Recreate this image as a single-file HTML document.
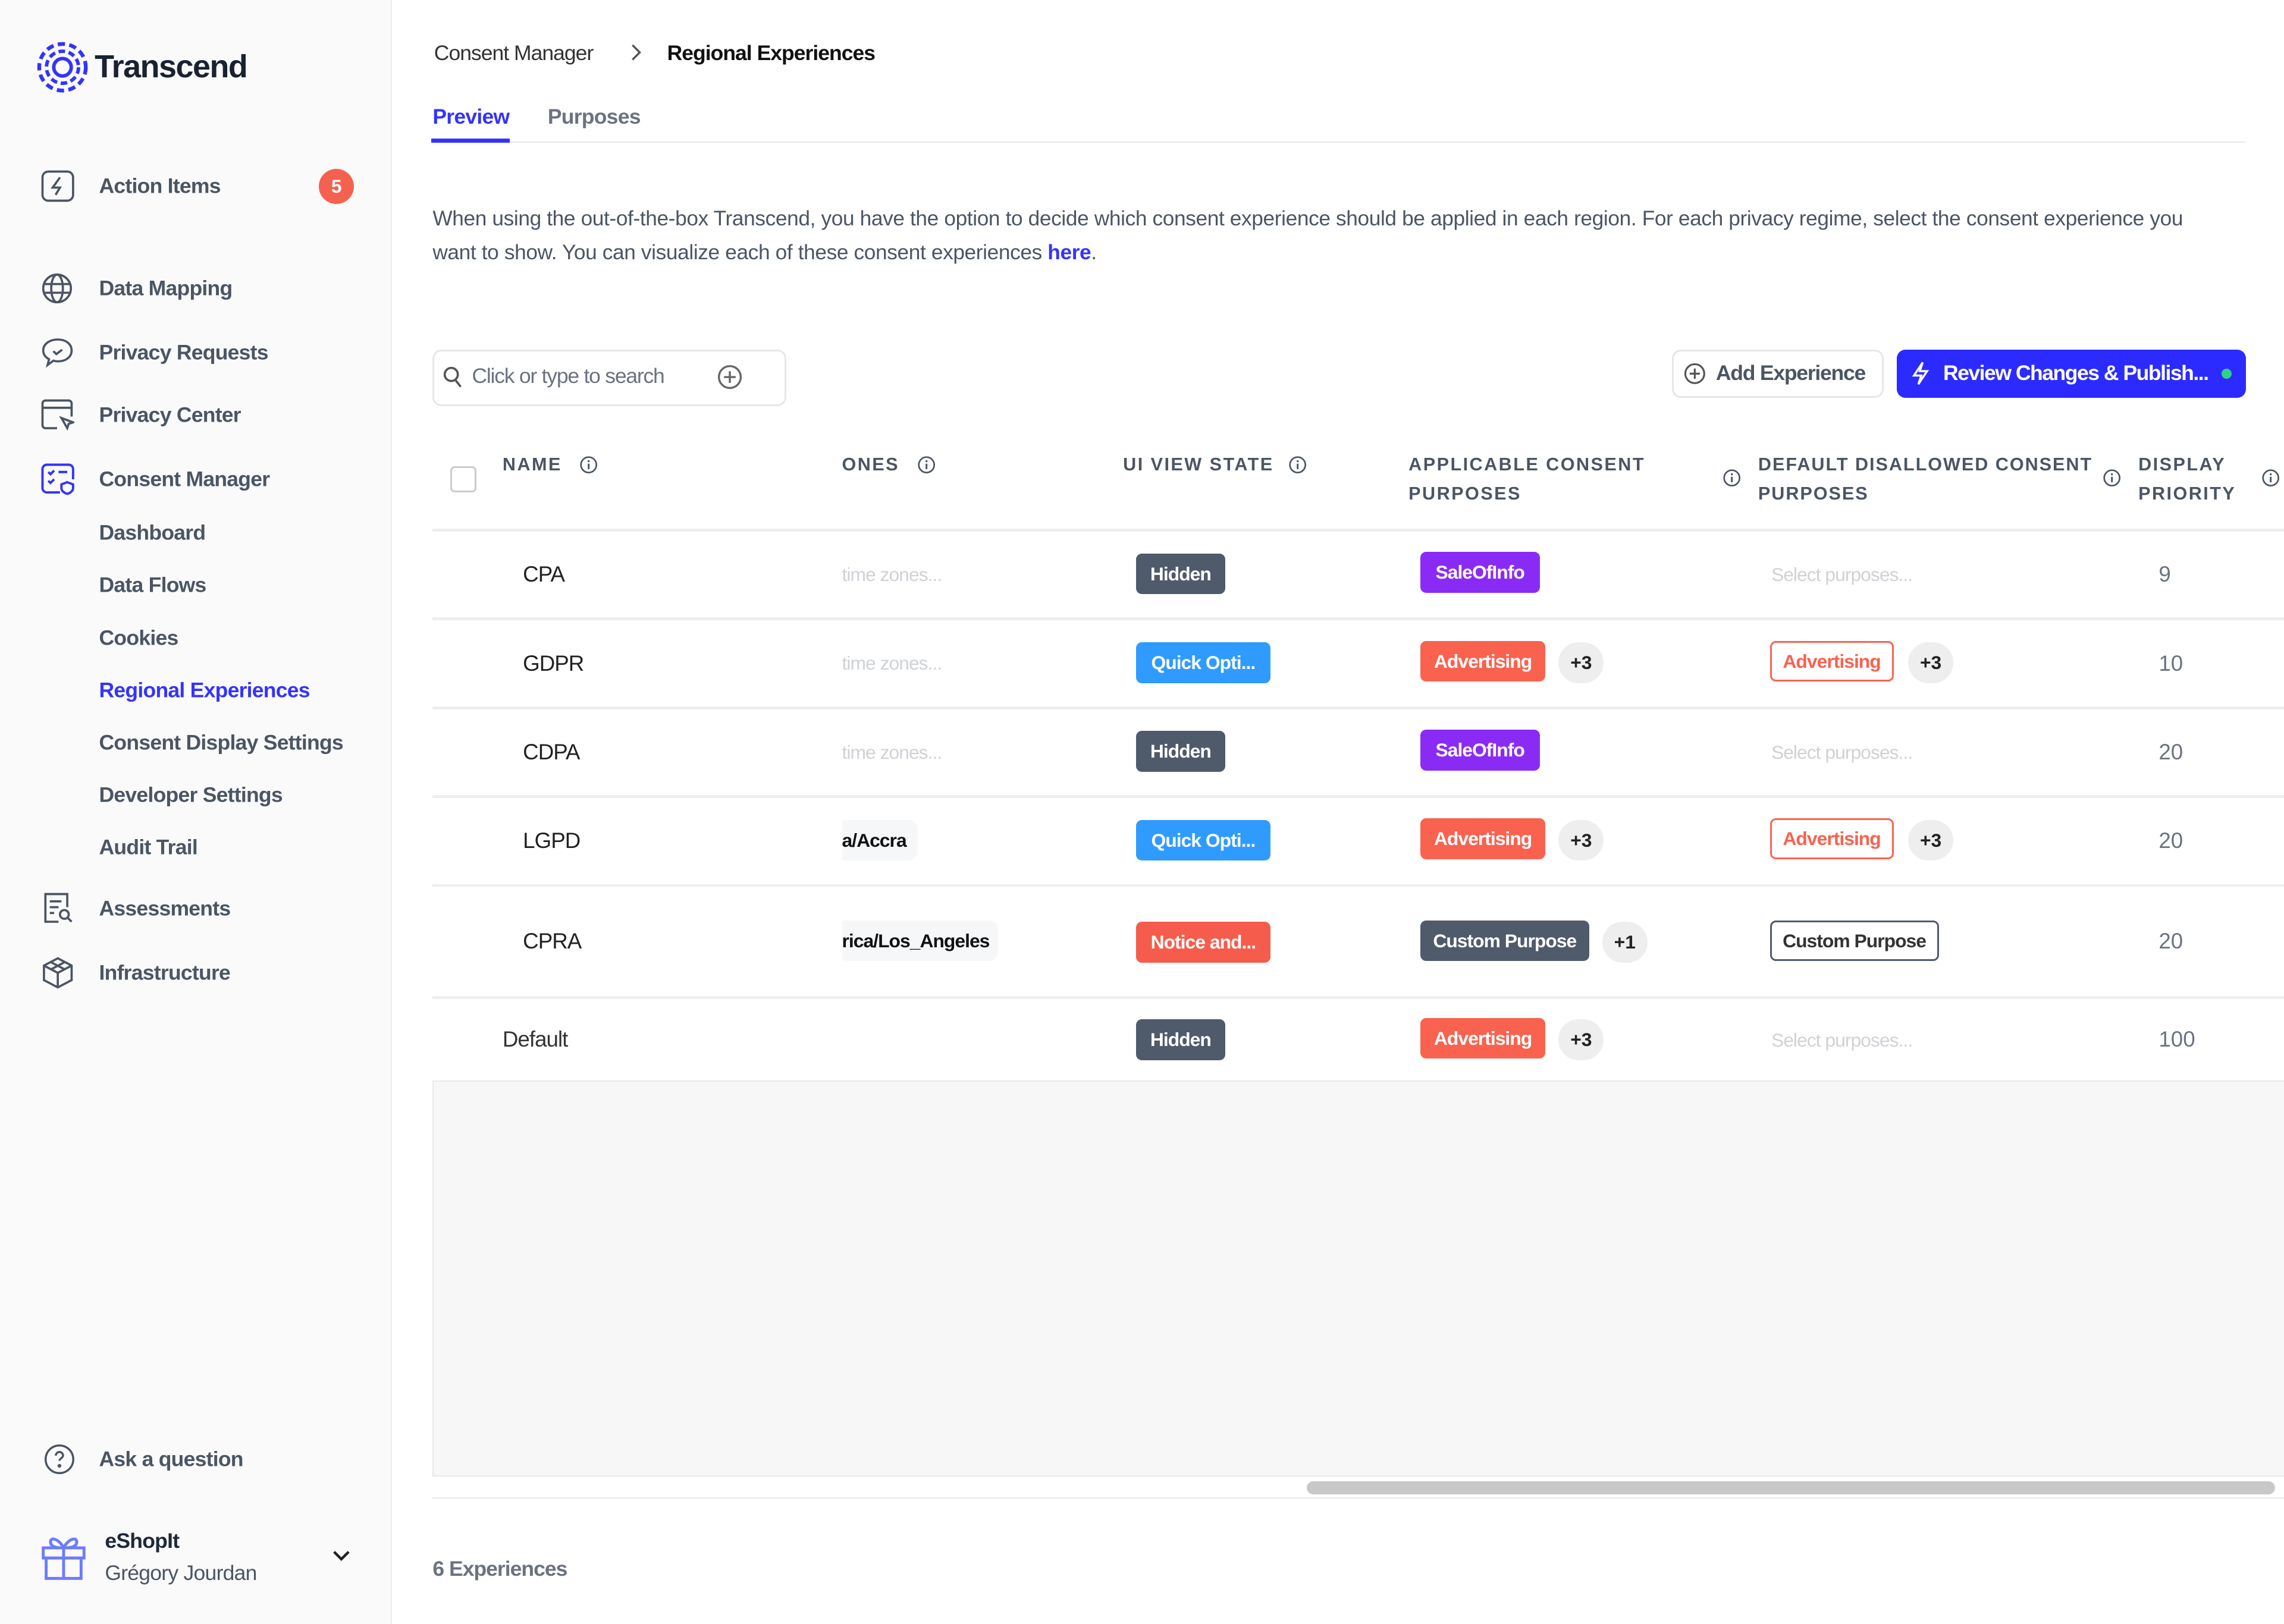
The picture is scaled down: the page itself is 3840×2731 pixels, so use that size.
<!DOCTYPE html>
<html><head><meta charset="utf-8"><style>
*{box-sizing:border-box;margin:0;padding:0}
html,body{width:3840px;height:2731px;overflow:hidden;background:#fff}
#r{zoom:2.44898;width:1568px;height:1115.2px;position:relative;font-family:"Liberation Sans",sans-serif;color:#1f2937;overflow:hidden}
.a{position:absolute;white-space:nowrap}
.nav{font-size:14.5px;font-weight:bold;color:#4b5563;letter-spacing:-0.3px;transform:translateY(-50%)}
.sub{left:68px}
.ic{position:absolute;transform:translateY(-50%)}
.hd{font-size:12.5px;font-weight:bold;color:#4b5563;letter-spacing:1px;line-height:20px}
.b{position:absolute;height:28px;line-height:28px;border-radius:4px;font-size:13px;font-weight:bold;color:#fff;text-align:center;letter-spacing:-0.4px}
.p{position:absolute;height:28px;width:31px;line-height:28px;border-radius:14px;background:#eeeeef;font-size:13px;font-weight:bold;text-align:center;color:#222}
.hl{position:absolute;left:297px;right:0;height:2px;background:#eee}
.ph{color:#cfd2d6;font-size:13px;letter-spacing:-0.4px}
.nm{font-size:15px;color:#222;letter-spacing:-0.4px}
.num{font-size:15px;color:#6b7280}
</style></head><body><div id="r">
<div class="a" style="left:0;top:0;width:269px;height:1116px;background:#fafafa;border-right:1px solid #ececec"></div>
<svg class="a" style="left:25px;top:28px" width="36" height="36" viewBox="0 0 36 36" fill="none" stroke="#3333ff"><circle cx="18" cy="18" r="16" stroke-width="2.6" stroke-dasharray="5 3"/><circle cx="18" cy="18" r="11" stroke-width="2.4" stroke-dasharray="4.5 2.5"/><circle cx="18" cy="18" r="6" stroke-width="2.4"/></svg>
<div class="a" style="left:65px;top:33px;font-size:22px;font-weight:bold;color:#1a2230;letter-spacing:-0.6px">Transcend</div>

<svg class="ic" style="left:28px;top:128px" width="23" height="22" viewBox="0 0 23 22" fill="none" stroke="#4b5563" stroke-width="1.5"><rect x="1" y="1" width="21" height="20" rx="4"/><path d="M13 5l-5 7h5l-3 5"/></svg>
<div class="a nav" style="left:68px;top:128px">Action Items</div>
<div class="a" style="left:219px;top:116px;width:24px;height:24px;border-radius:12px;background:#f5614f;color:#fff;font-size:13px;font-weight:bold;text-align:center;line-height:24px">5</div>

<svg class="ic" style="left:28px;top:198px" width="23" height="22" viewBox="0 0 23 22" fill="none" stroke="#4b5563" stroke-width="1.5"><circle cx="11" cy="11" r="9.5"/><ellipse cx="11" cy="11" rx="4" ry="9.5"/><path d="M1.5 8h19M1.5 14h19"/></svg>
<div class="a nav" style="left:68px;top:198px">Data Mapping</div>
<svg class="ic" style="left:28px;top:242px" width="23" height="22" viewBox="0 0 23 22" fill="none" stroke="#4b5563" stroke-width="1.5"><path d="M11.5 2C6 2 1.5 5 1.5 9.5c0 3 2 5 4 6l-1 4 4-3c1 .3 2 .5 3 .5 5.5 0 9.5-3 9.5-7.5S17 2 11.5 2z"/><path d="M8.5 10l2 2 4-3"/></svg>
<div class="a nav" style="left:68px;top:242px">Privacy Requests</div>
<svg class="ic" style="left:28px;top:285px" width="23" height="22" viewBox="0 0 23 22" fill="none" stroke="#4b5563" stroke-width="1.5"><path d="M11 20H3a2 2 0 01-2-2V3a2 2 0 012-2h16a2 2 0 012 2v9M1 6h20"/><path d="M14 13l8 3-3 1-1 3z"/></svg>
<div class="a nav" style="left:68px;top:285px">Privacy Center</div>
<svg class="ic" style="left:28px;top:329px" width="23" height="22" viewBox="0 0 23 22" fill="none" stroke="#3333ff" stroke-width="1.6"><path d="M13 20H4a3 3 0 01-3-3V4a3 3 0 013-3h15a3 3 0 013 3v7"/><path d="M5 6l1.5 1.5L9 5M5 12l1.5 1.5L9 11M12 6h6"/><path d="M18 13l4 1.5v2.5c0 2-2 3.5-4 4-2-.5-4-2-4-4v-2.5z"/></svg>
<div class="a nav" style="left:68px;top:329px">Consent Manager</div>
<div class="a nav sub" style="top:366px">Dashboard</div>
<div class="a nav sub" style="top:402px">Data Flows</div>
<div class="a nav sub" style="top:438px">Cookies</div>
<div class="a nav sub" style="top:474px;color:#3333ff">Regional Experiences</div>
<div class="a nav sub" style="top:510px">Consent Display Settings</div>
<div class="a nav sub" style="top:546px">Developer Settings</div>
<div class="a nav sub" style="top:582px">Audit Trail</div>
<svg class="ic" style="left:28px;top:624px" width="23" height="22" viewBox="0 0 23 22" fill="none" stroke="#4b5563" stroke-width="1.5"><path d="M12 20H3V1h15v9M6 6h8M6 10h6M6 14h3"/><circle cx="16" cy="15" r="3"/><path d="M18 17l3 3"/></svg>
<div class="a nav" style="left:68px;top:624px">Assessments</div>
<svg class="ic" style="left:28px;top:668px" width="23" height="22" viewBox="0 0 23 22" fill="none" stroke="#4b5563" stroke-width="1.5"><path d="M11.5 1l9.5 5v10l-9.5 5-9.5-5V6z"/><path d="M2 6l9.5 5 9.5-5M11.5 11v10M6.5 3.5l9.5 5M16.5 3.5l-9.5 5"/></svg>
<div class="a nav" style="left:68px;top:668px">Infrastructure</div>
<svg class="ic" style="left:30px;top:1002px" width="22" height="22" viewBox="0 0 22 22" fill="none" stroke="#4b5563" stroke-width="1.4"><circle cx="11" cy="11" r="9.5"/><path d="M8.5 8.5a2.5 2.5 0 115 0c0 1.5-2.5 2-2.5 3.5"/><circle cx="11" cy="15.5" r=".6" fill="#4b5563"/></svg>
<div class="a nav" style="left:68px;top:1002px">Ask a question</div>
<svg class="a" style="left:28px;top:1052px" width="31" height="33" viewBox="0 0 31 33" fill="none" stroke="#6b7cff" stroke-width="2"><rect x="1.5" y="11" width="28" height="7"/><rect x="3.5" y="18" width="24" height="14"/><path d="M15.5 11v21M15.5 11c-3-6-9-8-9-4s6 4 9 4c3 0 9 0 9-4s-6-2-9 4"/></svg>
<div class="a" style="left:72px;top:1050px;font-size:14.5px;font-weight:bold;color:#1f2937;letter-spacing:-0.3px">eShopIt</div>
<div class="a" style="left:72px;top:1072px;font-size:14.5px;color:#4b5563;letter-spacing:-0.3px">Grégory Jourdan</div>
<svg class="a" style="left:228px;top:1064px" width="13" height="9" viewBox="0 0 13 9" fill="none" stroke="#222" stroke-width="1.8"><path d="M1.5 1.5l5 5 5-5"/></svg>

<div class="a" style="left:298px;top:28px;font-size:14.5px;color:#333;letter-spacing:-0.4px">Consent Manager</div>
<svg class="a" style="left:431px;top:29px" width="10" height="14" viewBox="0 0 10 14" fill="none" stroke="#555" stroke-width="1.4"><path d="M3 2l5 5-5 5"/></svg>
<div class="a" style="left:458px;top:28px;font-size:14.5px;font-weight:bold;color:#111;letter-spacing:-0.4px">Regional Experiences</div>
<div class="a" style="left:297px;top:72px;font-size:14.5px;font-weight:bold;color:#3333ff;letter-spacing:-0.3px">Preview</div>
<div class="a" style="left:376px;top:72px;font-size:14.5px;font-weight:bold;color:#6b7280;letter-spacing:-0.3px">Purposes</div>
<div class="a" style="left:297px;top:97px;width:1244px;height:1px;background:#e5e7eb"></div>
<div class="a" style="left:296px;top:95px;width:54px;height:3px;background:#3333ff"></div>
<div class="a" style="left:297px;top:139px;width:1225px;white-space:normal;font-size:14.4px;line-height:23px;color:#4b5563;letter-spacing:-0.15px">When using the out-of-the-box Transcend, you have the option to decide which consent experience should be applied in each region. For each privacy regime, select the consent experience you want to show. You can visualize each of these consent experiences <b style="color:#3333ff">here</b>.</div>

<div class="a" style="left:297px;top:240px;width:243px;height:39px;border:1.5px solid #e6e7ea;border-radius:6px"></div>
<svg class="a" style="left:304px;top:251px" width="14" height="16" viewBox="0 0 14 16" fill="none" stroke="#555" stroke-width="1.5"><circle cx="6" cy="6" r="4.5"/><path d="M9 10l3.5 4.5"/></svg>
<div class="a" style="left:324px;top:250px;font-size:14.5px;color:#6b7280;letter-spacing:-0.5px">Click or type to search</div>
<svg class="a" style="left:492px;top:250px" width="18" height="18" viewBox="0 0 18 18" fill="none" stroke="#666" stroke-width="1.4"><circle cx="9" cy="9" r="7.5"/><path d="M9 5v8M5 9h8"/></svg>

<div class="a" style="left:1148px;top:240px;width:145px;height:33px;border:1.5px solid #e6e7ea;border-radius:6px"></div>
<svg class="a" style="left:1156px;top:249px" width="15" height="15" viewBox="0 0 15 15" fill="none" stroke="#555" stroke-width="1.3"><circle cx="7.5" cy="7.5" r="6.5"/><path d="M7.5 4v7M4 7.5h7"/></svg>
<div class="a" style="left:1178px;top:248px;font-size:14.5px;font-weight:bold;color:#4b5563;letter-spacing:-0.5px">Add Experience</div>
<div class="a" style="left:1302px;top:240px;width:240px;height:33px;background:#2b2bff;border-radius:6px"></div>
<svg class="a" style="left:1312px;top:248px" width="13" height="17" viewBox="0 0 13 17" fill="none" stroke="#fff" stroke-width="1.4"><path d="M8 1L2 10h5l-2 6 6-9H6z"/></svg>
<div class="a" style="left:1334px;top:248px;font-size:14.5px;font-weight:bold;color:#fff;letter-spacing:-0.6px">Review Changes &amp; Publish...</div>
<div class="a" style="left:1525px;top:253px;width:7px;height:7px;border-radius:4px;background:#2fd08a"></div>

<div class="a" style="left:309px;top:320px;width:18px;height:18px;border:1.5px solid #c8cbd0;border-radius:3px;background:#fff"></div>
<div class="a hd" style="left:345px;top:309px">NAME</div>
<div class="a hd" style="left:578px;top:309px">ONES</div>
<div class="a hd" style="left:771px;top:309px">UI VIEW STATE</div>
<div class="a hd" style="left:967px;top:309px">APPLICABLE CONSENT<br>PURPOSES</div>
<div class="a hd" style="left:1207px;top:309px;letter-spacing:0.8px">DEFAULT DISALLOWED CONSENT<br>PURPOSES</div>
<div class="a hd" style="left:1468px;top:309px">DISPLAY<br>PRIORITY</div>
<svg width="0" height="0" style="position:absolute"><defs><g id="i"><circle cx="6" cy="6" r="5.3" fill="none" stroke="#4b5563" stroke-width="1.1"/><path d="M6 5.2v3.8" stroke="#4b5563" stroke-width="1.2"/><circle cx="6" cy="3.5" r=".7" fill="#4b5563"/></g></defs></svg>
<svg class="a" style="left:398px;top:313px" width="12" height="12"><use href="#i"/></svg>
<svg class="a" style="left:630px;top:313px" width="12" height="12"><use href="#i"/></svg>
<svg class="a" style="left:885px;top:313px" width="12" height="12"><use href="#i"/></svg>
<svg class="a" style="left:1183px;top:322px" width="12" height="12"><use href="#i"/></svg>
<svg class="a" style="left:1444px;top:322px" width="12" height="12"><use href="#i"/></svg>
<svg class="a" style="left:1553px;top:322px" width="12" height="12"><use href="#i"/></svg>

<div class="hl" style="top:363px"></div>
<div class="hl" style="top:424px"></div>
<div class="hl" style="top:485px"></div>
<div class="hl" style="top:546px"></div>
<div class="hl" style="top:607px"></div>
<div class="hl" style="top:684px"></div>

<div class="a nm" style="left:359px;top:386px">CPA</div>
<div class="a ph" style="left:578px;top:387px">time zones...</div>
<div class="b" style="left:780px;top:380px;width:61px;background:#4f5a6b">Hidden</div>
<div class="b" style="left:975px;top:379px;width:82px;background:#8a2bf5">SaleOfInfo</div>
<div class="a ph" style="left:1216px;top:387px">Select purposes...</div>
<div class="a num" style="left:1482px;top:386px">9</div>

<div class="a nm" style="left:359px;top:447px">GDPR</div>
<div class="a ph" style="left:578px;top:448px">time zones...</div>
<div class="b" style="left:780px;top:441px;width:92px;background:#2f9bff">Quick Opti...</div>
<div class="b" style="left:975px;top:440px;width:86px;background:#f9624f">Advertising</div>
<div class="p" style="left:1070px;top:441px">+3</div>
<div class="b" style="left:1215px;top:440px;width:85px;background:#fff;border:1.5px solid #f9624f;color:#f9624f;line-height:26px">Advertising</div>
<div class="p" style="left:1310px;top:441px">+3</div>
<div class="a num" style="left:1482px;top:447px">10</div>

<div class="a nm" style="left:359px;top:508px">CDPA</div>
<div class="a ph" style="left:578px;top:509px">time zones...</div>
<div class="b" style="left:780px;top:502px;width:61px;background:#4f5a6b">Hidden</div>
<div class="b" style="left:975px;top:501px;width:82px;background:#8a2bf5">SaleOfInfo</div>
<div class="a ph" style="left:1216px;top:509px">Select purposes...</div>
<div class="a num" style="left:1482px;top:508px">20</div>

<div class="a nm" style="left:359px;top:569px">LGPD</div>
<div class="a" style="left:578px;top:563px;width:52px;height:28px;background:#f6f7f8;border-radius:0 6px 6px 0;font-size:13px;font-weight:bold;line-height:28px;color:#111;letter-spacing:-0.4px">a/Accra</div>
<div class="b" style="left:780px;top:563px;width:92px;background:#2f9bff">Quick Opti...</div>
<div class="b" style="left:975px;top:562px;width:86px;background:#f9624f">Advertising</div>
<div class="p" style="left:1070px;top:563px">+3</div>
<div class="b" style="left:1215px;top:562px;width:85px;background:#fff;border:1.5px solid #f9624f;color:#f9624f;line-height:26px">Advertising</div>
<div class="p" style="left:1310px;top:563px">+3</div>
<div class="a num" style="left:1482px;top:569px">20</div>

<div class="a nm" style="left:359px;top:638px">CPRA</div>
<div class="a" style="left:578px;top:632px;width:107px;height:28px;background:#f6f7f8;border-radius:0 6px 6px 0;font-size:13px;font-weight:bold;line-height:28px;color:#111;letter-spacing:-0.4px">rica/Los_Angeles</div>
<div class="b" style="left:780px;top:633px;width:92px;background:#f65c4c">Notice and...</div>
<div class="b" style="left:975px;top:632px;width:116px;background:#4f5a6b">Custom Purpose</div>
<div class="p" style="left:1100px;top:633px">+1</div>
<div class="b" style="left:1215px;top:632px;width:116px;background:#fff;border:1.5px solid #4f5a6b;color:#333;line-height:26px">Custom Purpose</div>
<div class="a num" style="left:1482px;top:638px">20</div>

<div class="a nm" style="left:345px;top:705px;color:#333">Default</div>
<div class="b" style="left:780px;top:700px;width:61px;background:#4f5a6b">Hidden</div>
<div class="b" style="left:975px;top:699px;width:86px;background:#f9624f">Advertising</div>
<div class="p" style="left:1070px;top:700px">+3</div>
<div class="a ph" style="left:1216px;top:707px">Select purposes...</div>
<div class="a num" style="left:1482px;top:705px">100</div>

<div class="a" style="left:297px;top:742px;width:1280px;height:272px;background:#f7f7f8;border:1px solid #e8e8ea"></div>
<div class="a" style="left:897px;top:1017px;width:665px;height:9px;border-radius:5px;background:#c8c8ca"></div>
<div class="a" style="left:297px;top:1028px;width:1280px;height:1px;background:#e8e8ea"></div>
<div class="a" style="left:297px;top:1069px;font-size:14.5px;font-weight:bold;color:#6b7280;letter-spacing:-0.4px">6 Experiences</div>
</div></body></html>
